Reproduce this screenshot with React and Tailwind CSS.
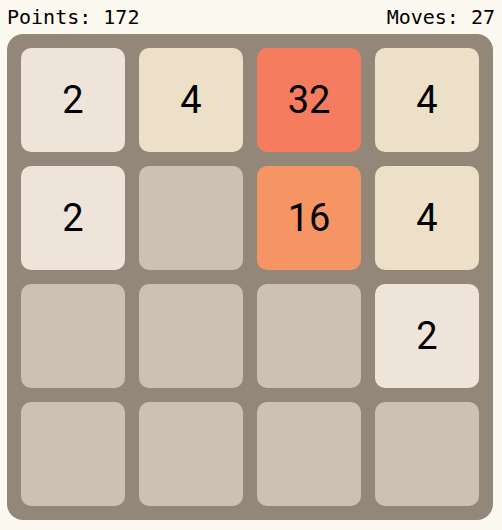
import React from "react";

const board = [
  [2, 4, 32, 4],
  [2, 0, 16, 4],
  [0, 0, 0, 2],
  [0, 0, 0, 0],
];

const tileColor = {
  0: "bg-[#cdc1b4]",
  2: "bg-[#eee4da]",
  4: "bg-[#ede0c8]",
  16: "bg-[#f59563]",
  32: "bg-[#f67c5f]",
};

function Tile({ value }) {
  return (
    <div
      className={`flex h-[104px] w-[104px] items-center justify-center rounded-[10px] text-[38px] text-black ${tileColor[value]}`}
      style={{ fontFamily: "Roboto, 'Noto Sans', sans-serif" }}
    >
      {value ? value : ""}
    </div>
  );
}

export default function App() {
  return (
    <div className="min-h-[530px] w-[502px] bg-[#fcf9f0] px-[7px]">
      <div
        className="flex h-[34px] items-center justify-between text-[20px] text-black"
        style={{ fontFamily: "'DejaVu Sans Mono', 'Liberation Mono', monospace" }}
      >
        <span>Points: 172</span>
        <span>Moves: 27</span>
      </div>
      <div className="grid w-[486px] grid-cols-4 gap-[14px] rounded-[16px] bg-[#928779] p-[14px]">
        {board.flat().map((v, i) => (
          <Tile key={i} value={v} />
        ))}
      </div>
    </div>
  );
}
